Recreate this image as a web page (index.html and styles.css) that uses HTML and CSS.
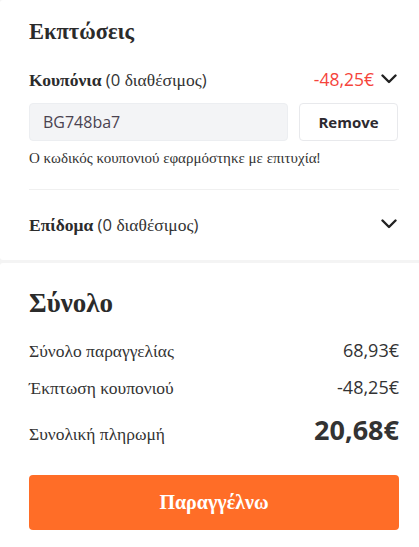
FILE: index.html
```html
<!DOCTYPE html>
<html lang="el">
<head>
<meta charset="utf-8">
<title>Ολοκλήρωση παραγγελίας</title>
<link rel="stylesheet" href="styles.css">
</head>
<body>
<div class="page">
  <section class="card discounts">
    <h2 class="card-title">Εκπτώσεις</h2>

    <div class="acc-row">
      <div class="acc-label"><b>Κουπόνια</b> <span class="lat">(0</span> διαθέσιμος<span class="lat">)</span></div>
      <div class="acc-side">
        <span class="amount-neg">-48,25€</span>
        <svg class="chev" viewBox="0 0 16 10" width="16" height="10"><path d="M1.5 1.5 L8 8 L14.5 1.5" fill="none" stroke="#222" stroke-width="2.4" stroke-linecap="round" stroke-linejoin="round"/></svg>
      </div>
    </div>

    <div class="coupon-form">
      <input class="coupon-input" type="text" value="BG748ba7" readonly>
      <button class="btn-remove" type="button">Remove</button>
    </div>
    <p class="coupon-msg">Ο κωδικός κουπονιού εφαρμόστηκε με επιτυχία<span class="lat">!</span></p>

    <div class="acc-row acc-bonus">
      <div class="acc-label"><b>Επίδομα</b> <span class="lat">(0</span> διαθέσιμος<span class="lat">)</span></div>
      <div class="acc-side">
        <svg class="chev" viewBox="0 0 16 10" width="16" height="10"><path d="M1.5 1.5 L8 8 L14.5 1.5" fill="none" stroke="#222" stroke-width="2.4" stroke-linecap="round" stroke-linejoin="round"/></svg>
      </div>
    </div>
  </section>

  <section class="card summary">
    <h2 class="card-title title-total">Σύνολο</h2>
    <div class="sum-row sum-first">
      <span>Σύνολο παραγγελίας</span>
      <span class="num">68,93€</span>
    </div>
    <div class="sum-row">
      <span>Έκπτωση κουπονιού</span>
      <span class="num">-48,25€</span>
    </div>
    <div class="sum-row sum-grand">
      <span>Συνολική πληρωμή</span>
      <span class="num num-grand">20,68€</span>
    </div>
    <button class="btn-order" type="button">Παραγγέλνω</button>
  </section>
</div>
</body>
</html>
```

FILE: styles.css
```css
* { box-sizing: border-box; }

html, body {
  margin: 0;
  padding: 0;
  background: #f4f4f4;
}

body {
  font-family: "Liberation Serif", "Times New Roman", serif;
  color: #333;
  overflow: hidden;
}

/* Latin punctuation and digits inside Greek copy use the UI sans */
.lat {
  font-family: "Open Sans", sans-serif;
  font-size: 0.95em;
}

.page {
  display: flex;
  flex-direction: column;
  gap: 3px;
  width: 428px;
}

.card {
  background: #fff;
  border-radius: 3px;
  padding: 0 29px;
}

.card-title {
  margin: 0;
  font-weight: bold;
  font-size: 22.5px;
  line-height: 26px;
  color: #2b2b2b;
}

.discounts {
  padding-top: 19px;
  padding-bottom: 24px;
}

.acc-row {
  display: flex;
  justify-content: space-between;
  align-items: center;
  margin-top: 22px;
  height: 24px;
  font-size: 17.5px;
}

.acc-label b { color: #2b2b2b; }

.acc-side {
  display: flex;
  align-items: center;
  gap: 7px;
  margin-right: 2px;
}

.amount-neg {
  font-family: "Open Sans", sans-serif;
  font-size: 17.5px;
  color: #f5443b;
}

.chev { display: block; }

.coupon-form {
  display: flex;
  gap: 11px;
  margin-top: 12px;
}

.coupon-input {
  flex: 1;
  min-width: 0;
  height: 38px;
  border: 1px solid #eceef1;
  border-radius: 4px;
  background: #f3f4f6;
  padding: 0 13px;
  font-family: "Open Sans", sans-serif;
  font-size: 16px;
  color: #4a4250;
  outline: none;
}

.btn-remove {
  width: 99px;
  height: 38px;
  margin-right: 1px;
  border: 1px solid #e8e9ec;
  border-radius: 4px;
  background: #fff;
  font-family: "Open Sans", sans-serif;
  font-weight: bold;
  font-size: 15px;
  color: #2d2a30;
  padding: 0;
}

.coupon-msg {
  margin: 8px 0 0;
  font-size: 15px;
  line-height: 18px;
  padding-bottom: 22px;
  border-bottom: 1px solid #f0f0f0;
}

.acc-bonus {
  margin-top: 22px;
}

.summary {
  padding-top: 24px;
  padding-bottom: 40px;
  flex: 1;
}

.title-total {
  font-size: 27px;
  line-height: 32px;
}

.sum-row {
  display: flex;
  justify-content: space-between;
  align-items: baseline;
  font-size: 17.5px;
  margin-top: 14px;
  line-height: 22px;
}

.sum-row.sum-first { margin-top: 20px; }

.num {
  font-family: "Open Sans", sans-serif;
  font-size: 18px;
  color: #333;
}

.sum-grand { margin-top: 13px; }

.num-grand {
  font-size: 27px;
  font-weight: bold;
  line-height: 36px;
}

.btn-order {
  display: block;
  width: 100%;
  height: 55px;
  margin-top: 27px;
  border: 0;
  border-radius: 4px;
  background: #ff6d27;
  color: #fff;
  font-family: "Liberation Serif", "Times New Roman", serif;
  font-weight: bold;
  font-size: 20px;
}
```
